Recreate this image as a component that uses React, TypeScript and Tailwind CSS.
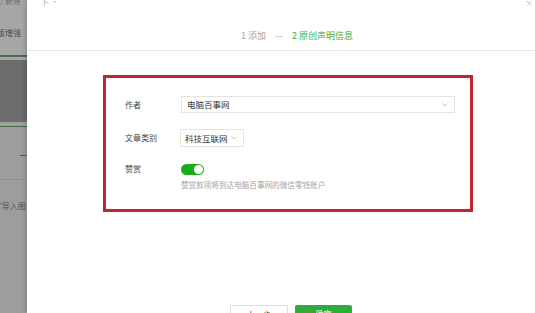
const font = { fontFamily: '"Noto Sans CJK SC", "Noto Sans", sans-serif' };

function Caret() {
  return (
    <svg width="6" height="4" viewBox="0 0 6 4" className="shrink-0">
      <path d="M0.5 0.5 L3 3 L5.5 0.5" fill="none" stroke="#b5b5b5" strokeWidth="0.8" />
    </svg>
  );
}

function BackdropStrip() {
  return (
    <div className="relative w-[27px] shrink-0 flex flex-col overflow-hidden bg-[#9d9d9d] text-[8px] leading-none text-[#4a4a4a]">
      <div className="h-[55px] shrink-0 bg-[#a6a6a6]">
        <div className="-mt-[3px] whitespace-nowrap text-[#6e6e6e]">/ 新建</div>
        <div className="mt-[24px] -ml-[3px] whitespace-nowrap">版增强</div>
      </div>
      <div className="h-[2px] shrink-0 bg-[#4d6b4f]" />
      <div className="h-[3px] shrink-0 bg-[#a6a6a6]" />
      <div className="h-[62px] shrink-0 bg-[#6c6c6c]" />
      <div className="h-[4px] shrink-0 bg-[#a0a0a0]" />
      <div className="h-[1px] shrink-0 bg-[#3f6b44]" />
      <div className="h-[28px] shrink-0" />
      <div className="flex justify-end">
        <div className="h-[1px] w-[7px] bg-[#5a5a5a]" />
      </div>
      <div className="h-[23px] shrink-0" />
      <div className="h-[1px] w-[24px] shrink-0 bg-[#8c8c8c]" />
      <div className="mt-[22px] -ml-[2px] whitespace-nowrap text-[#555]">*导入图</div>
    </div>
  );
}

export default function App() {
  return (
    <div className="flex h-[313px] w-[535px] overflow-hidden bg-white" style={font}>
      <BackdropStrip />
      <div className="relative flex flex-1 flex-col bg-white shadow-[-2px_0_4px_rgba(0,0,0,0.15)]">
        <div className="absolute left-[14px] -top-[4px] text-[8px] text-[#aaa]">卜 ·</div>
        <div className="absolute right-[2px] -top-[3px] text-[8px] text-[#bbb]">×</div>

        {/* header steps */}
        <div className="flex h-[51px] shrink-0 items-end border-b border-[#e8e8e8] pb-[10px] pl-[214px] text-[9px] leading-none">
          <span className="text-[#a3a3a3]">1 添加</span>
          <span className="mx-[9px] mb-[3px] h-px w-[8px] bg-[#d4d4d4]" />
          <span className="text-[#3fae3c]">2 原创声明信息</span>
        </div>

        {/* form body */}
        <div className="ml-[76px] mt-[24px] h-[137px] w-[370px] shrink-0 border-[3px] border-[#c4252d] pl-[19px] pt-[18px] text-[8px] leading-none">
          <div className="flex items-center">
            <span className="w-[56px] text-[#444]">作者</span>
            <div className="flex h-[17px] w-[274px] items-center justify-between border border-[#e4e4e4] pl-[5px] pr-[6px]">
              <span className="text-[8.5px] text-[#333]">电脑百事网</span>
              <Caret />
            </div>
          </div>
          <div className="mt-[16px] flex items-center">
            <span className="w-[55px] text-[#444]">文章类别</span>
            <div className="flex h-[18px] w-[64px] items-center justify-between border border-[#e4e4e4] pl-[4px] pr-[6px]">
              <span className="text-[8.5px] text-[#333]">科技互联网</span>
              <Caret />
            </div>
          </div>
          <div className="mt-[17px] flex items-start">
            <span className="mt-[1px] w-[56px] text-[#444]">赞赏</span>
            <div className="flex flex-col">
              <div className="flex h-[11px] w-[23px] items-center justify-end rounded-full bg-[#1aad19] pr-[1px]">
                <div className="h-[9px] w-[9px] rounded-full bg-white" />
              </div>
              <span className="mt-[6px] text-[7.6px] text-[#a3a3a3]">赞赏款项将到达电脑百事网的微信零钱账户</span>
            </div>
          </div>
        </div>

        {/* footer buttons */}
        <div className="mt-[93px] flex shrink-0 gap-[7px] pl-[203px] text-[8px] leading-none">
          <button className="flex h-[22px] w-[58px] items-start justify-center border border-[#e0e0e0] bg-white pt-[5px] text-[#333]">
            上一步
          </button>
          <button className="flex h-[22px] w-[57px] items-start justify-center rounded-[2px] bg-[#2fab3a] pt-[5px] text-white">
            确定
          </button>
        </div>
      </div>
    </div>
  );
}
